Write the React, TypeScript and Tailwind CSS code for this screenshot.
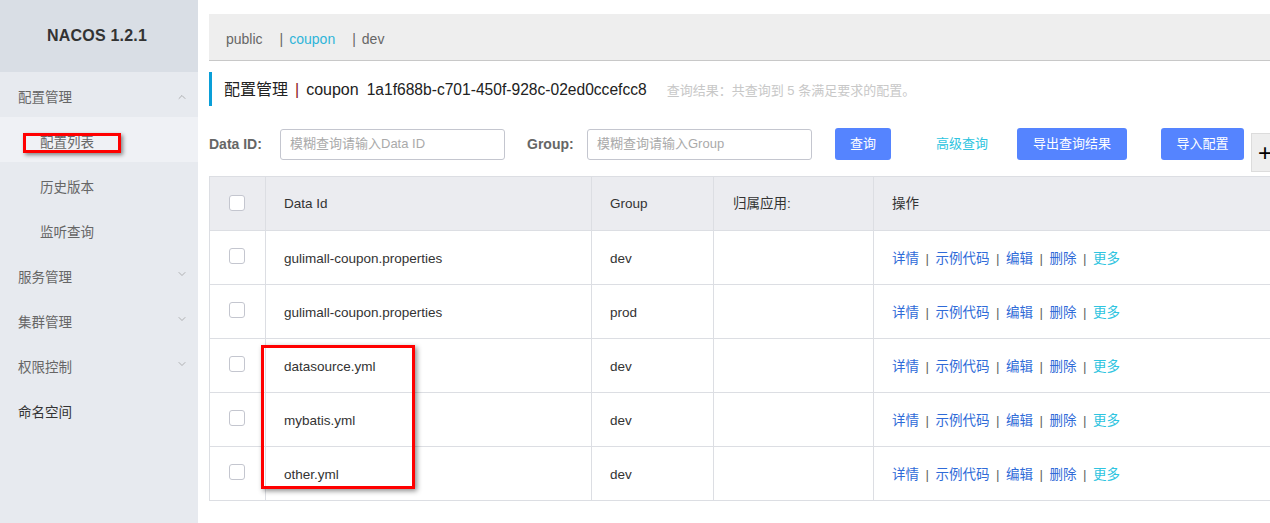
import { ChevronDown, ChevronUp } from 'lucide-react';

const rows = [
  { id: 'gulimall-coupon.properties', group: 'dev' },
  { id: 'gulimall-coupon.properties', group: 'prod' },
  { id: 'datasource.yml', group: 'dev' },
  { id: 'mybatis.yml', group: 'dev' },
  { id: 'other.yml', group: 'dev' },
];

const menu = [
  { label: '配置管理', icon: 'up', sub: false },
  { label: '配置列表', sub: true, active: true },
  { label: '历史版本', sub: true },
  { label: '监听查询', sub: true },
  { label: '服务管理', icon: 'down', sub: false },
  { label: '集群管理', icon: 'down', sub: false },
  { label: '权限控制', icon: 'down', sub: false },
  { label: '命名空间', sub: false, dark: true },
];

const font = "font-['Liberation_Sans','Noto_Sans_CJK_SC',sans-serif]";

function Checkbox() {
  return <div className="w-4 h-4 rounded-[3px] border border-[#c4c6cf] bg-white" />;
}

function Sidebar() {
  return (
    <aside className="w-[198px] shrink-0 bg-[#e7eaef] relative">
      <div className="h-[72px] bg-[#d9dee5] flex items-center justify-center pr-[4px]">
        <span className="text-[16px] font-bold text-[#333] tracking-[0.2px]">NACOS 1.2.1</span>
      </div>
      {menu.map((m) => (
        <div
          key={m.label}
          className={`h-[45px] flex items-center justify-between pt-[8px] ${m.sub ? 'pl-[40px]' : 'pl-[18px]'} pr-[10px] ${m.active ? 'bg-[#eff1f5]' : ''}`}
        >
          <span className={`text-[13.5px] ${m.dark ? 'text-[#333]' : 'text-[#666]'}`}>{m.label}</span>
          {m.icon === 'up' && <ChevronUp size={12} strokeWidth={1.2} className="text-[#888] -mt-[4px]" />}
          {m.icon === 'down' && <ChevronDown size={12} strokeWidth={1.2} className="text-[#888] -mt-[10px]" />}
        </div>
      ))}
      <div className="absolute left-[23px] top-[133px] w-[98px] h-[20px] border-[3px] border-[#ff0000] shadow-[2px_2px_4px_rgba(0,0,0,0.45)]" />
    </aside>
  );
}

function Actions() {
  const sep = <span className="text-[#666] mx-[6.5px]">|</span>;
  return (
    <span className="text-[13.5px] text-[#2f6bd8]">
      详情{sep}示例代码{sep}编辑{sep}删除{sep}
      <span className="text-[#2ec4e0]">更多</span>
    </span>
  );
}

export default function App() {
  return (
    <div className={`w-[1270px] h-[523px] overflow-hidden flex bg-white ${font}`}>
      <Sidebar />
      <main className="flex-1 min-w-0 overflow-hidden pl-[11px] pt-[14px] relative">
        <div className="w-[1100px]">
          <div className="h-[47px] bg-[#eeeeee] border-b border-[#c8c8c8] flex items-center pl-[17px] text-[14px] text-[#666] pt-[4px]">
            <span>public</span>
            <span className="ml-[17px]">|</span>
            <span className="ml-[6px] text-[#2fb5d9]">coupon</span>
            <span className="ml-[17px]">|</span>
            <span className="ml-[6px]">dev</span>
          </div>

          <div className="mt-[11px] h-[34px] flex items-center border-l-[3px] border-[#0a9fd8] pl-[12px] pt-[2px]">
            <span className="text-[16px] text-[#222]">配置管理</span>
            <span className="text-[16px] text-[#8b1a1a] mx-[7px]">|</span>
            <span className="text-[16px] text-[#222]">coupon</span>
            <span className="text-[15.6px] text-[#222] ml-[8px]">1a1f688b-c701-450f-928c-02ed0ccefcc8</span>
            <span className="text-[13px] text-[#c8c8c8] ml-[20px] mt-[1px]">查询结果：共查询到 5 条满足要求的配置。</span>
          </div>

          <div className="mt-[22px] h-[32px] flex items-center relative">
            <span className="text-[14px] font-bold text-[#666] w-[71px]">Data ID:</span>
            <div className="w-[225px] h-[31px] border border-[#c4c6cf] rounded-[3px] flex items-center px-[9px] text-[13px] text-[#aaa]">
              模糊查询请输入Data ID
            </div>
            <span className="text-[14px] font-bold text-[#666] ml-[22px] w-[60px]">Group:</span>
            <div className="w-[225px] h-[31px] border border-[#c4c6cf] rounded-[3px] flex items-center px-[9px] text-[13px] text-[#aaa]">
              模糊查询请输入Group
            </div>
            <div className="ml-[23px] w-[56px] h-[32px] bg-[#5584ff] rounded-[3px] flex items-center justify-center text-[13px] text-white">查询</div>
            <span className="ml-[45px] text-[13px] text-[#2ec4e0]">高级查询</span>
            <div className="ml-[29px] w-[110px] h-[32px] bg-[#5584ff] rounded-[3px] flex items-center justify-center text-[13px] text-white">导出查询结果</div>
            <div className="ml-[34px] w-[83px] h-[32px] bg-[#5584ff] rounded-[3px] flex items-center justify-center text-[13px] text-white">导入配置</div>
            <div className="absolute left-[1042px] top-[5px] w-[40px] h-[39px] bg-[#eeeeee] border border-[#dcdcdc] flex items-center pl-[6px] text-[24px] text-black leading-none">+</div>
          </div>

          <div className="mt-[16px]">
            <div className="grid grid-cols-[56px_326px_122px_160px_1fr] border-t border-l border-[#dcdee3] text-[13.5px] text-[#333]">
              <div className="h-[54px] bg-[#ebecf0] border-r border-b border-[#dcdee3] flex items-center justify-center pb-[2px] pr-[2px]"><Checkbox /></div>
              <div className="h-[54px] bg-[#ebecf0] border-r border-b border-[#dcdee3] flex items-center pl-[18px] pt-[1px]">Data Id</div>
              <div className="h-[54px] bg-[#ebecf0] border-r border-b border-[#dcdee3] flex items-center pl-[18px] pt-[1px]">Group</div>
              <div className="h-[54px] bg-[#ebecf0] border-r border-b border-[#dcdee3] flex items-center pl-[19px] pt-[1px]">归属应用:</div>
              <div className="h-[54px] bg-[#ebecf0] border-b border-[#dcdee3] flex items-center pl-[18px] pt-[1px]">操作</div>
              {rows.map((r, i) => (
                <div key={i} className="contents">
                  <div className="h-[54px] border-r border-b border-[#dcdee3] flex items-center justify-center pb-[4px] pr-[2px]"><Checkbox /></div>
                  <div className="h-[54px] border-r border-b border-[#dcdee3] flex items-center pl-[18px] pt-[3px]">{r.id}</div>
                  <div className="h-[54px] border-r border-b border-[#dcdee3] flex items-center pl-[18px] pt-[3px]">{r.group}</div>
                  <div className="h-[54px] border-r border-b border-[#dcdee3]" />
                  <div className="h-[54px] border-b border-[#dcdee3] flex items-center pl-[18px] pt-[3px]"><Actions /></div>
                </div>
              ))}
            </div>
          </div>
        </div>
        <div className="absolute left-[63px] top-[345px] w-[154px] h-[144px] border-[3px] border-[#ff0000] shadow-[2px_2px_5px_rgba(0,0,0,0.45)] z-20" />
      </main>
    </div>
  );
}
